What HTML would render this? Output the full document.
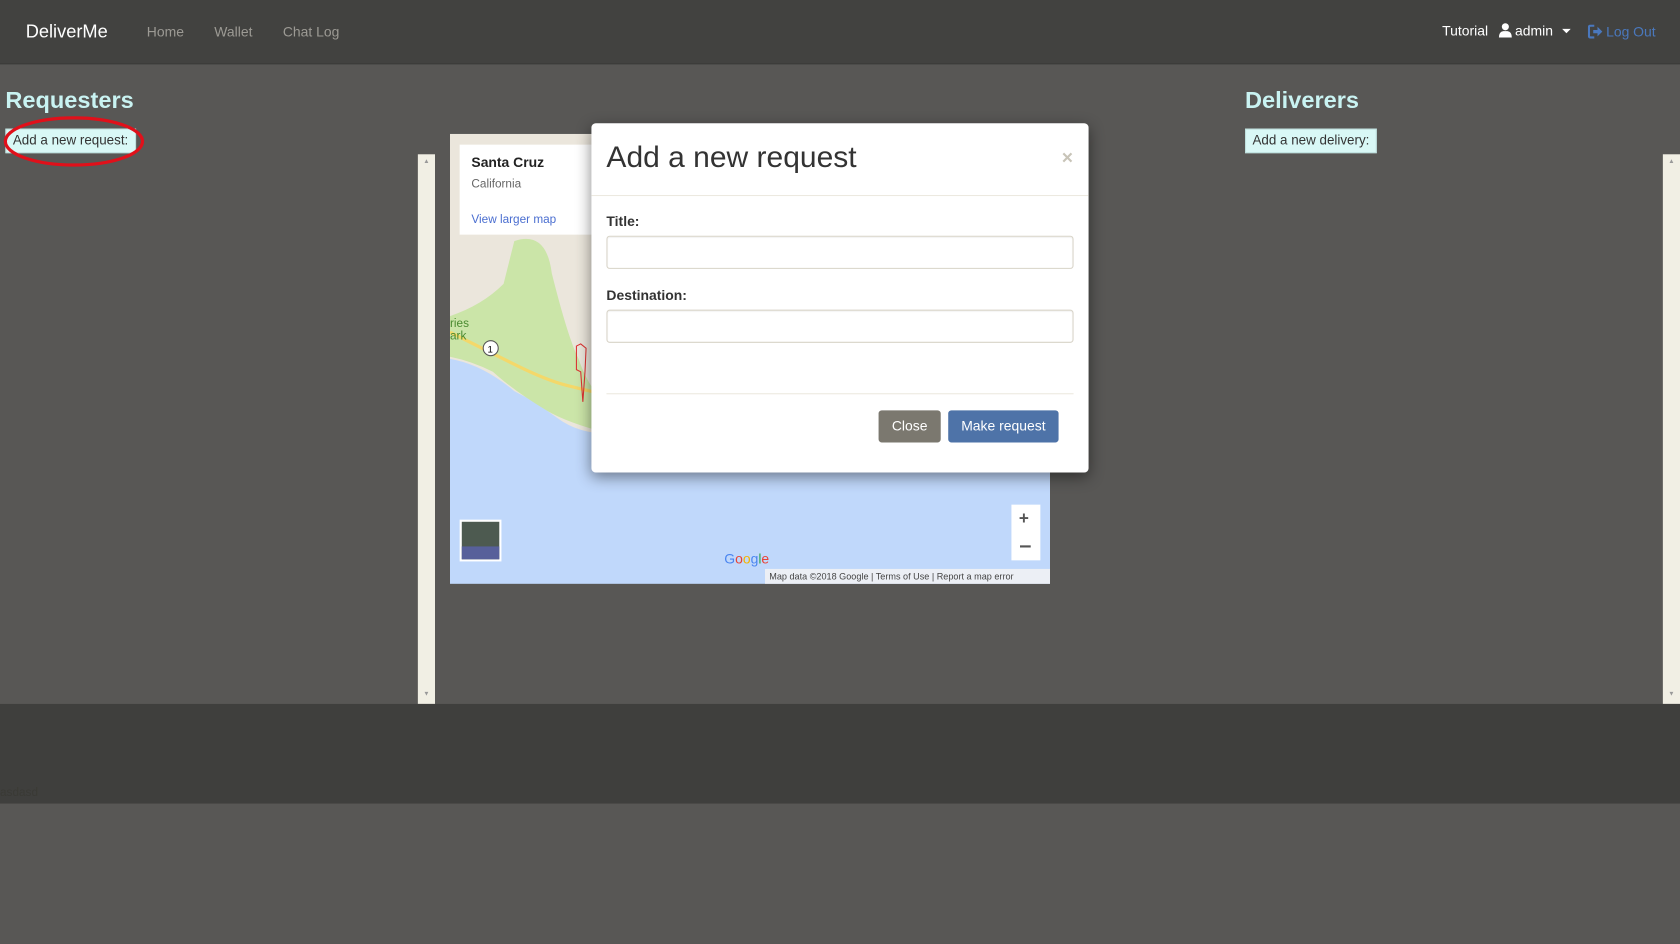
<!DOCTYPE html>
<html><head><meta charset="utf-8"><style>
html,body{margin:0;padding:0;background:#585755;overflow:hidden;width:1680px;height:944px}
#w{position:absolute;left:0;top:0;width:1568px;height:881px;transform:scale(1.0714286);transform-origin:0 0;font-family:"Liberation Sans",Arial,sans-serif;background:#585755}
.a{position:absolute}
.nav{left:0;top:0;width:1568px;height:59px;background:#424240;border-bottom:1px solid #3a3a38}
.nl{color:#9c9a94;font-size:13px;top:22px}
h2{margin:0;position:absolute;font-size:22px;font-weight:bold;color:#c9f3f2}
.btn1{background:#d9f8f6;border:1px solid #bfe0de;color:#333;font-size:12.5px;padding:3px 6px;line-height:15px}
.mod{left:552px;top:115px;width:464px;height:326px;background:#fff;border-radius:4px;box-shadow:0 4px 14px rgba(0,0,0,.45)}
.inp{left:14px;width:434px;height:29px;border:1px solid #d8d4c8;border-radius:3px;box-shadow:inset 0 1px 1px rgba(0,0,0,.06)}
.lbl{left:14px;font-size:13px;font-weight:bold;color:#333}
</style></head><body><div id="w">
<div class="a nav"></div>
<div class="a" style="left:24px;top:20px;color:#fff;font-size:17px">DeliverMe</div>
<div class="a nl" style="left:137px">Home</div>
<div class="a nl" style="left:200px">Wallet</div>
<div class="a nl" style="left:264px">Chat Log</div>
<div class="a" style="left:1346px;top:21px;color:#fff;font-size:13px">Tutorial</div>
<svg class="a" style="left:1398px;top:21px" width="14" height="14" viewBox="0 0 14 14"><circle cx="7" cy="4" r="3.3" fill="#fff"/><path d="M1 14 Q1 8.5 5 8 L9 8 Q13 8.5 13 14Z" fill="#fff"/></svg>
<div class="a" style="left:1414px;top:21px;color:#fff;font-size:13px">admin</div>
<div class="a" style="left:1458px;top:27px;width:0;height:0;border-left:4px solid transparent;border-right:4px solid transparent;border-top:4px solid #fff"></div>
<svg class="a" style="left:1482px;top:23px" width="14" height="13" viewBox="0 0 14 13"><path d="M6 1H2.5Q1 1 1 2.5v8Q1 12 2.5 12H6" stroke="#4a78bd" stroke-width="2" fill="none"/><path d="M5 5h4V2l4.5 4.5L9 11V8H5z" fill="#4a78bd"/></svg>
<div class="a" style="left:1499px;top:22px;color:#4a78bd;font-size:13px">Log Out</div>

<h2 style="left:5px;top:81px">Requesters</h2>
<div class="a btn1" style="left:5px;top:120px">Add a new request:</div>
<svg class="a" style="left:2px;top:107px" width="136" height="52"><ellipse cx="67" cy="25" rx="64" ry="22" fill="none" stroke="#e0101a" stroke-width="3"/></svg>
<h2 style="left:1162px;top:81px">Deliverers</h2>
<div class="a btn1" style="left:1162px;top:120px">Add a new delivery:</div>

<div class="a" style="left:390px;top:144px;width:16px;height:513px;background:#f1efe4"></div>
<div class="a" style="left:395px;top:148px;font-size:6px;color:#999">▲</div>
<div class="a" style="left:395px;top:645px;font-size:6px;color:#999">▼</div>
<div class="a" style="left:1552px;top:144px;width:16px;height:513px;background:#f1efe4"></div>
<div class="a" style="left:1557px;top:148px;font-size:6px;color:#999">▲</div>
<div class="a" style="left:1557px;top:645px;font-size:6px;color:#999">▼</div>

<svg class="a" style="left:420px;top:125px" width="560" height="420" viewBox="0 0 560 420">
<rect width="560" height="420" fill="#c0d8fb"/>
<path d="M0 0H560V260Q520 270 480 275Q420 280 380 270Q320 268 240 265Q180 262 150 280Q120 280 100 265Q80 250 60 240Q30 215 0 210Z" fill="#ebe6dc"/>
<path d="M60 100Q90 90 95 130Q110 190 120 210Q130 240 150 255L150 280Q110 270 90 258Q60 240 40 222Q20 212 0 208V170Q30 160 50 140Z" fill="#cbe5a8"/>
<path d="M0 185Q30 200 60 215Q90 230 110 235Q150 245 200 255" stroke="#f4d86a" stroke-width="3" fill="none"/>
<circle cx="38" cy="200" r="7" fill="#fff" stroke="#555"/>
<text x="35" y="204" font-size="9" font-family="Liberation Sans">1</text>
<path d="M118 198L122 196L127 200L126 222L124 250L122 222L118 220Z" fill="none" stroke="#d33" stroke-width="1"/>
<text x="0" y="180" font-size="11" fill="#4a8a30" font-family="Liberation Sans">ries</text>
<text x="0" y="192" font-size="11" fill="#4a8a30" font-family="Liberation Sans">ark</text>
<rect x="9" y="10" width="140" height="84" fill="#fff"/>
<text x="20" y="31" font-size="13" fill="#222" font-family="Liberation Sans" font-weight="bold">Santa Cruz</text>
<text x="20" y="50" font-size="11" fill="#666" font-family="Liberation Sans">California</text>
<text x="20" y="83" font-size="11" fill="#4a6ed0" font-family="Liberation Sans">View larger map</text>
<rect x="9" y="360" width="39" height="39" fill="#fff"/>
<rect x="11" y="362" width="35" height="35" fill="#4d5a50"/><rect x="11" y="385" width="35" height="12" fill="#57609a"/>
<rect x="524" y="346" width="27" height="52" fill="#fff"/>
<text x="531" y="364" font-size="16" fill="#555" font-family="Liberation Sans" font-weight="bold">+</text>
<rect x="532" y="384" width="10" height="2" fill="#555"/>
<text x="256" y="401" font-size="13" font-family="Liberation Sans" fill="#4a85f0">G<tspan fill="#e94235">o</tspan><tspan fill="#f5b400">o</tspan><tspan fill="#4a85f0">g</tspan><tspan fill="#34a853">l</tspan><tspan fill="#e94235">e</tspan></text>
<rect x="294" y="406" width="266" height="14" fill="#f3f3f3" opacity=".85"/>
<text x="298" y="416" font-size="8.5" fill="#444" font-family="Liberation Sans">Map data ©2018 Google   |  Terms of Use  |  Report a map error</text>
</svg>

<div class="a mod">
<div class="a" style="left:14px;top:16px;font-size:28px;color:#333">Add a new request</div>
<div class="a" style="left:439px;top:22px;font-size:18px;color:#c8c4b8;font-weight:bold">×</div>
<div class="a" style="left:0;top:67px;width:464px;height:1px;background:#ece9e0"></div>
<div class="a lbl" style="top:84px">Title:</div>
<div class="a inp" style="top:105px"></div>
<div class="a lbl" style="top:153px">Destination:</div>
<div class="a inp" style="top:174px"></div>
<div class="a" style="left:14px;top:252px;width:436px;height:1px;background:#ece9e0"></div>
<div class="a" style="left:268px;top:268px;width:58px;height:30px;background:#7b786f;border-radius:3px;color:#fff;font-size:13px;text-align:center;line-height:30px">Close</div>
<div class="a" style="left:333px;top:268px;width:103px;height:30px;background:#4e73a8;border-radius:3px;color:#fff;font-size:13px;text-align:center;line-height:30px">Make request</div>
</div>

<div class="a" style="left:0;top:657px;width:1568px;height:93px;background:#3f3f3d"></div>
<div class="a" style="left:0;top:734px;font-size:11px;color:#3a3a35">asdasd</div>
</div></body></html>
